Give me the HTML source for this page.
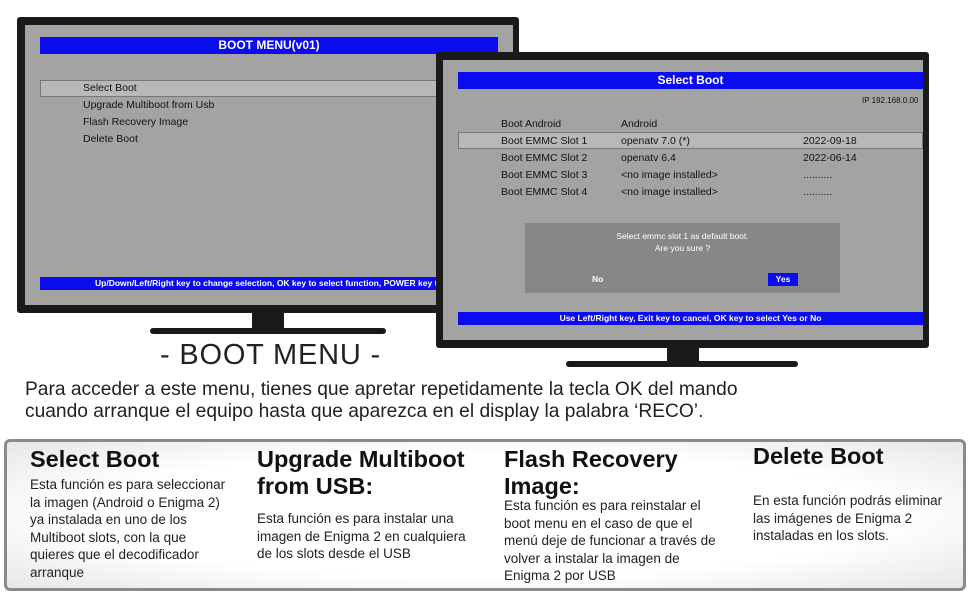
<!DOCTYPE html>
<html><head><meta charset="utf-8"><style>
*{margin:0;padding:0;box-sizing:border-box}
body{width:970px;height:600px;background:#fff;position:relative;overflow:hidden;font-family:"Liberation Sans",sans-serif}
.a{position:absolute}
.bez{background:#1a1a1a;border-radius:3px}
.scr{background:#a3a4a2}
.blue{background:#0b0bf0;color:#fff;text-align:center;font-weight:bold}
.t{font-size:10.5px;color:#111;white-space:nowrap}
.h{font-weight:bold;font-size:23.5px;color:#111;line-height:27px;white-space:nowrap}
.p{font-size:13.5px;color:#222;line-height:17.5px;white-space:nowrap}
</style></head><body>
<!-- left TV -->
<div class="a bez" style="left:17px;top:17px;width:502px;height:296px"></div>
<div class="a scr" style="left:25px;top:25px;width:488px;height:280px"></div>
<div class="a blue" style="left:40px;top:37px;width:458px;height:17px;font-size:12px;line-height:17px">BOOT MENU(v01)</div>
<div class="a" style="left:40px;top:80px;width:400px;height:17px;background:#b8b9b7;border:1px solid #777"></div>
<div class="a t" style="left:83px;top:82px">Select Boot</div>
<div class="a t" style="left:83px;top:99px">Upgrade Multiboot from Usb</div>
<div class="a t" style="left:83px;top:116px">Flash Recovery Image</div>
<div class="a t" style="left:83px;top:133px">Delete Boot</div>
<div class="a blue" style="left:40px;top:277px;width:400px;height:13px;font-size:8.5px;line-height:13px;padding-left:55px;text-align:left;white-space:nowrap;overflow:hidden">Up/Down/Left/Right key to change selection, OK key to select function, POWER key to exit</div>
<div class="a" style="left:252px;top:313px;width:32px;height:16px;background:#1a1a1a"></div>
<div class="a" style="left:150px;top:328px;width:236px;height:6px;background:#1a1a1a;border-radius:3px"></div>
<!-- right TV -->
<div class="a bez" style="left:436px;top:52px;width:493px;height:296px"></div>
<div class="a scr" style="left:443px;top:60px;width:480px;height:280px"></div>
<div class="a blue" style="left:458px;top:72px;width:465px;height:17px;font-size:12px;line-height:17px">Select Boot</div>
<div class="a t" style="left:862px;top:96px;font-size:8px">IP 192.168.0.00</div>
<div class="a" style="left:458px;top:132px;width:465px;height:17px;background:#b8b9b7;border:1px solid #777"></div>
<div class="a t" style="left:501px;top:118px">Boot Android</div><div class="a t" style="left:621px;top:118px">Android</div>
<div class="a t" style="left:501px;top:135px">Boot EMMC Slot 1</div><div class="a t" style="left:621px;top:135px">openatv 7.0 (*)</div><div class="a t" style="left:803px;top:135px">2022-09-18</div>
<div class="a t" style="left:501px;top:152px">Boot EMMC Slot 2</div><div class="a t" style="left:621px;top:152px">openatv 6.4</div><div class="a t" style="left:803px;top:152px">2022-06-14</div>
<div class="a t" style="left:501px;top:169px">Boot EMMC Slot 3</div><div class="a t" style="left:621px;top:169px">&lt;no image installed&gt;</div><div class="a t" style="left:803px;top:169px">..........</div>
<div class="a t" style="left:501px;top:186px">Boot EMMC Slot 4</div><div class="a t" style="left:621px;top:186px">&lt;no image installed&gt;</div><div class="a t" style="left:803px;top:186px">..........</div>
<div class="a" style="left:525px;top:223px;width:315px;height:70px;background:#878886"></div>
<div class="a" style="left:525px;top:230px;width:315px;text-align:center;color:#fff;font-size:8.5px;line-height:12px">Select emmc slot 1 as default boot.<br>Are you sure ?</div>
<div class="a" style="left:592px;top:274px;color:#fff;font-size:8.5px;font-weight:bold">No</div>
<div class="a blue" style="left:768px;top:273px;width:30px;height:13px;font-size:8.5px;line-height:13px">Yes</div>
<div class="a blue" style="left:458px;top:312px;width:465px;height:13px;font-size:8.5px;line-height:13px">Use Left/Right key, Exit key to cancel, OK key to select Yes or No</div>
<div class="a" style="left:667px;top:347px;width:32px;height:14px;background:#1a1a1a"></div>
<div class="a" style="left:566px;top:361px;width:232px;height:6px;background:#1a1a1a;border-radius:3px"></div>
<!-- texts -->
<div class="a" style="left:160px;top:339px;font-size:29px;letter-spacing:0.8px;color:#222;white-space:nowrap">- BOOT MENU -</div>
<div class="a" style="left:25px;top:379px;font-size:19.2px;line-height:22px;color:#222;white-space:nowrap">Para acceder a este menu, tienes que apretar repetidamente la tecla OK del mando<br>cuando arranque el equipo hasta que aparezca en el display la palabra ‘RECO’.</div>
<div class="a" style="left:4px;top:439px;width:962px;height:152px;border:3px solid #8a8a8a;border-radius:6px;background:radial-gradient(ellipse at center,#fff 60%,#e6e6e6 100%)"></div>
<div class="a h" style="left:30px;top:446px">Select Boot</div>
<div class="a p" style="left:30px;top:476px">Esta función es para seleccionar<br>la imagen (Android o Enigma 2)<br>ya instalada en uno de los<br>Multiboot slots, con la que<br>quieres que el decodificador<br>arranque</div>
<div class="a h" style="left:257px;top:446px">Upgrade Multiboot<br>from USB:</div>
<div class="a p" style="left:257px;top:510px">Esta función es para instalar una<br>imagen de Enigma 2 en cualquiera<br>de los slots desde el USB</div>
<div class="a h" style="left:504px;top:446px">Flash Recovery<br>Image:</div>
<div class="a p" style="left:504px;top:497px">Esta función es para reinstalar el<br>boot menu en el caso de que el<br>menú deje de funcionar a través de<br>volver a instalar la imagen de<br>Enigma 2 por USB</div>
<div class="a h" style="left:753px;top:443px">Delete Boot</div>
<div class="a p" style="left:753px;top:492px">En esta función podrás eliminar<br>las imágenes de Enigma 2<br>instaladas en los slots.</div>
</body></html>
